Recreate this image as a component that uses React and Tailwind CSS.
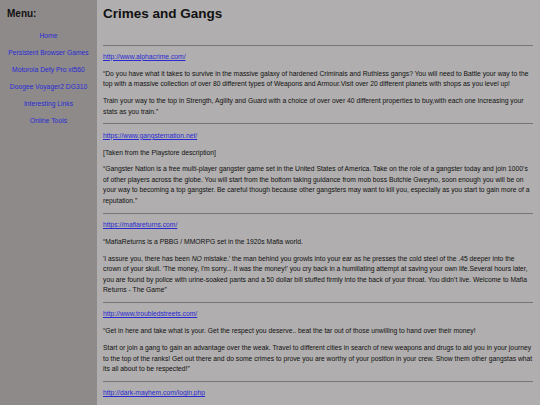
import React from "react";

const menu = [
  "Home",
  "Persistent Browser Games",
  "Motorola Defy Pro xt560",
  "Doogee Voyager2 DG310",
  "Interesting Links",
  "Online Tools",
];

const games = [
  {
    url: "http://www.alphacrime.com/",
    paras: [
      "“Do you have what it takes to survive in the massive galaxy of hardened Criminals and Ruthless gangs? You will need to Battle your way to the top with a massive collection of over 80 different types of Weapons and Armour.Visit over 20 different planets with shops as you level up!",
      "Train your way to the top in Strength, Agility and Guard with a choice of over over 40 different properties to buy,with each one increasing your stats as you train.”",
    ],
  },
  {
    url: "https://www.gangsternation.net/",
    paras: [
      "[Taken from the Playstore description]",
      "“Gangster Nation is a free multi-player gangster game set in the United States of America. Take on the role of a gangster today and join 1000's of other players across the globe. You will start from the bottom taking guidance from mob boss Butchie Gweyno, soon enough you will be on your way to becoming a top gangster. Be careful though because other gangsters may want to kill you, especially as you start to gain more of a reputation.”",
    ],
  },
  {
    url: "https://mafiareturns.com/",
    paras: [
      "“MafiaReturns is a PBBG / MMORPG set in the 1920s Mafia world.",
      <>
        'I assure you, there has been <i>NO</i> mistake.' the man behind you growls into your ear as he presses the cold steel of the .45 deeper into the crown of your skull. 'The money, I'm sorry... It was the money!' you cry back in a humiliating attempt at saving your own life.Several hours later, you are found by police with urine-soaked pants and a 50 dollar bill stuffed firmly into the back of your throat. You didn't live. Welcome to Mafia Returns - The Game”
      </>,
    ],
  },
  {
    url: "http://www.troubledstreets.com/",
    paras: [
      "“Get in here and take what is your. Get the respect you deserve.. beat the tar out of those unwilling to hand over their money!",
      "Start or join a gang to gain an advantage over the weak. Travel to different cities in search of new weapons and drugs to aid you in your journey to the top of the ranks! Get out there and do some crimes to prove you are worthy of your position in your crew. Show them other gangstas what its all about to be respected!”",
    ],
  },
];

const App = () => {
  return (
    <div className="min-h-screen flex font-['Liberation_Sans',Arial,sans-serif] text-[#111]">
      {/* Sidebar */}
      <div className="w-[97px] shrink-0 bg-[#8e8a8a] pt-[8px]">
        <h3 className="pl-[7px] text-[10px] font-bold leading-[11.5px]">Menu:</h3>
        <div className="mt-[11px] flex flex-col items-center gap-[6.6px]">
          {menu.map((m) => (
            <a key={m} href="#" className="text-[6.75px] leading-[10.5px] text-[#2a2ad4]">
              {m}
            </a>
          ))}
        </div>
      </div>

      {/* Content */}
      <div className="flex-1 bg-[#b0aeae] pl-[6px] pr-[7px] text-[6.75px] leading-[10.5px]">
        <h2 className="mt-[6px] mb-[23px] text-[13.5px] font-bold leading-[15.5px]">Crimes and Gangs</h2>

        {games.map((g) => (
          <div key={g.url}>
            <hr className="my-[6.35px] border-0 border-t border-[#767474]" />
            <p className="my-[6.35px]">
              <a href="#" className="text-[#2a2ad4] underline">{g.url}</a>
            </p>
            {g.paras.map((p, i) => (
              <p key={i} className="my-[6.35px]">{p}</p>
            ))}
          </div>
        ))}
        <hr className="my-[6.35px] border-0 border-t border-[#767474]" />
        <p className="my-[6.35px]">
          <a href="#" className="text-[#2a2ad4] underline">http://dark-mayhem.com/login.php</a>
        </p>
      </div>
    </div>
  );
};

export default App;
